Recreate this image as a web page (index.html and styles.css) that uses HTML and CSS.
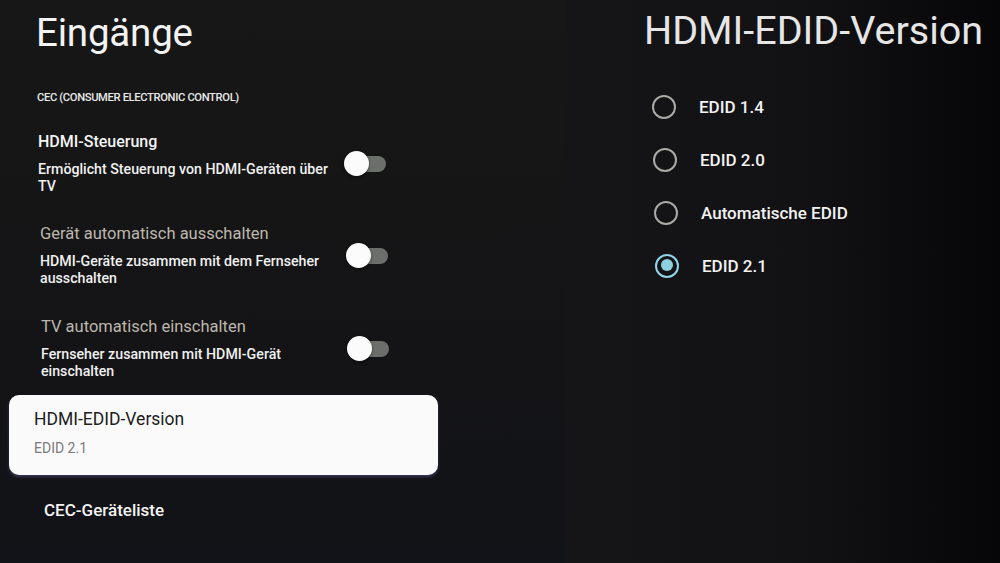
FILE: index.html
```html
<!DOCTYPE html>
<html lang="de">
<head>
    <meta charset="UTF-8">
    <meta name="viewport" content="width=device-width, initial-scale=1.0">
    <title>Eingänge</title>
    <link rel="stylesheet" href="styles.css">
</head>
<body>

<div class="screen">
    <!-- left: settings list -->
    <div class="settings">
        <h1 class="page-title">Eingänge</h1>
        <div class="section-label">CEC (CONSUMER ELECTRONIC CONTROL)</div>

        <div class="item">
            <div class="item-text">
                <div class="item-title strong">HDMI-Steuerung</div>
                <div class="item-desc">Ermöglicht Steuerung von HDMI-Geräten über TV</div>
            </div>
            <span class="switch"></span>
        </div>

        <div class="item shift-1">
            <div class="item-text">
                <div class="item-title dim">Gerät automatisch ausschalten</div>
                <div class="item-desc">HDMI-Geräte zusammen mit dem Fernseher ausschalten</div>
            </div>
            <span class="switch"></span>
        </div>

        <div class="item shift-2">
            <div class="item-text">
                <div class="item-title dim">TV automatisch einschalten</div>
                <div class="item-desc">Fernseher zusammen mit HDMI-Gerät einschalten</div>
            </div>
            <span class="switch"></span>
        </div>

        <div class="card">
            <div class="card-title">HDMI-EDID-Version</div>
            <div class="card-value">EDID 2.1</div>
        </div>

        <div class="link-item">CEC-Geräteliste</div>
    </div>

    <!-- right: options panel -->
    <div class="options">
        <h2 class="options-title">HDMI-EDID-Version</h2>
        <ul class="radio-list">
            <li><span class="radio"></span>EDID 1.4</li>
            <li class="shift-1"><span class="radio"></span>EDID 2.0</li>
            <li class="shift-2"><span class="radio"></span>Automatische EDID</li>
            <li class="shift-3"><span class="radio checked"></span>EDID 2.1</li>
        </ul>
    </div>
</div>

</body>
</html>
```

FILE: styles.css
```css
html, body {
    height: 100%;
    margin: 0;
    padding: 0;
    font-family: Roboto, "Liberation Sans", Arial, sans-serif;
    overflow: hidden;
}

body {
    background: #0c0c0e;
}

.screen {
    display: flex;
    height: 100%;
}

/* left column */
.settings {
    width: 565px;
    flex-shrink: 0;
    padding: 10px 0 0 9px;
    box-sizing: border-box;
    background: linear-gradient(180deg, #171717 0%, #141416 60%, #121318 100%);
    color: #f2f2f2;
}

.page-title {
    margin: 0 0 0 27px;
    font-size: 38.5px;
    line-height: 45px;
    font-weight: 400;
    color: #f3f3f3;
    letter-spacing: -0.2px;
}

.section-label {
    margin: 35px 0 0 28px;
    font-size: 11.2px;
    line-height: 16px;
    font-weight: 500;
    letter-spacing: -0.35px;
    color: #eaeaea;
}

.item {
    display: flex;
    align-items: center;
    margin-top: 26px;
    padding-left: 29px;
}

.item.shift-1 { margin-top: 29px; padding-left: 31px; }
.item.shift-2 { margin-top: 30px; padding-left: 32px; }

.item-text {
    width: 302px;
}

.item-title {
    font-size: 16.5px;
    line-height: 20px;
}

.item-title.strong {
    font-size: 16px;
    font-weight: 500;
    color: #f4f4f4;
}

.item-title.dim {
    color: #bcb8ad;
}

.item-desc {
    margin-top: 9px;
    font-size: 14.2px;
    line-height: 17px;
    font-weight: 500;
    color: #f0f0f0;
}

/* toggle switch, off state */
.switch {
    position: relative;
    width: 42px;
    height: 26px;
    flex-shrink: 0;
    margin-left: 4px;
}

.switch::before {
    content: "";
    position: absolute;
    left: 10px;
    top: 5px;
    width: 32px;
    height: 16px;
    border-radius: 8px;
    background: #6c6e6c;
}

.switch::after {
    content: "";
    position: absolute;
    left: 0;
    top: 0;
    width: 25px;
    height: 25px;
    border-radius: 50%;
    background: #fbfbfb;
    box-shadow: 0 1px 3px rgba(0, 0, 0, 0.5);
}

/* focused entry */
.card {
    width: 429px;
    margin-top: 15px;
    padding: 14px 0 18px 25px;
    box-sizing: border-box;
    background: #fafafa;
    border-radius: 10px;
    box-shadow: 0 2px 3px rgba(120, 120, 200, 0.35);
}

.card-title {
    font-size: 17.5px;
    line-height: 20px;
    color: #1d1d1d;
}

.card-value {
    margin-top: 11px;
    font-size: 14px;
    line-height: 17px;
    color: #7b7b7b;
}

.link-item {
    margin: 25px 0 0 35px;
    font-size: 17px;
    line-height: 20px;
    font-weight: 500;
    color: #f3f3f3;
}

/* right column */
.options {
    flex: 1;
    padding: 8px 0 0 79px;
    background: linear-gradient(90deg, #151518 0%, #121215 55%, #060608 100%);
}

.options-title {
    margin: 0;
    font-size: 39.5px;
    line-height: 46px;
    font-weight: 400;
    color: #e6e6e6;
}

.radio-list {
    list-style: none;
    margin: 26px 0 0 8px;
    padding: 0;
}

.radio-list li {
    display: flex;
    align-items: center;
    height: 53px;
    font-size: 17px;
    font-weight: 500;
    color: #f2f2f2;
}

.radio-list li.shift-1 { padding-left: 1px; }
.radio-list li.shift-2 { padding-left: 2px; }
.radio-list li.shift-3 { padding-left: 3px; }

.radio {
    width: 24px;
    height: 24px;
    box-sizing: border-box;
    border: 2.5px solid #a9a9a6;
    border-radius: 50%;
    margin-right: 23px;
    position: relative;
}

.radio.checked {
    border-color: #8fd5ec;
}

.radio.checked::after {
    content: "";
    position: absolute;
    left: 3.5px;
    top: 3.5px;
    width: 12px;
    height: 12px;
    border-radius: 50%;
    background: #8dd0df;
}
```
